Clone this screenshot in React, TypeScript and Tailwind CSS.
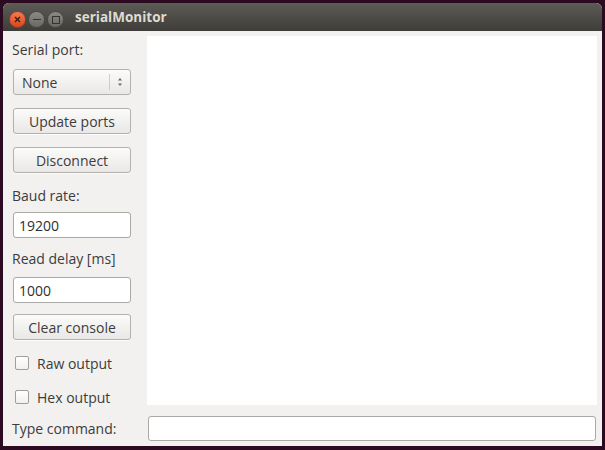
import React from 'react';

const font = { fontFamily: '"Open Sans", "Noto Sans", sans-serif' };

function Btn({ label }: { label: string }) {
  return (
    <div className="h-[26px] w-[118px] rounded-[3px] border border-[#b3b1ac] bg-gradient-to-b from-[#fbfbfa] to-[#e9e8e6] flex items-center justify-center text-[14px] text-[#3c3c3c] shadow-[0_1px_0_rgba(255,255,255,0.8)]">
      {label}
    </div>
  );
}

function Field({ value }: { value: string }) {
  return (
    <div className="h-[26px] w-[118px] rounded-[3px] border border-[#a9a8a4] bg-white flex items-center pl-[5px] text-[14px] text-[#2f2f2f]">
      {value}
    </div>
  );
}

function Label({ text, className = '' }: { text: string; className?: string }) {
  return (
    <div className={`h-[26px] shrink-0 flex items-center -ml-[1px] text-[14px] text-[#3c3c3c] ${className}`}>{text}</div>
  );
}

function Check({ label, className = '' }: { label: string; className?: string }) {
  return (
    <div className={`h-[26px] shrink-0 flex items-center ${className}`}>
      <div className="ml-[2px] w-[14px] h-[14px] rounded-[2px] border border-[#9f9e9a] bg-gradient-to-b from-white to-[#f1f0ee]" />
      <span className="ml-[8px] text-[14px] text-[#3c3c3c]">{label}</span>
    </div>
  );
}

export default function App() {
  return (
    <div className="w-[605px] h-[450px] bg-[#2c0a22] pt-[3px] pl-[3px] pr-[3px] pb-[4px]" style={font}>
      <div className="h-full flex flex-col rounded-t-[6px] overflow-hidden bg-[#f2f1f0]">
        {/* title bar */}
        <div className="h-[28px] shrink-0 bg-gradient-to-b from-[#5c5b56] to-[#3e3d39] flex items-center pt-[5px]">
          <div className="ml-[6px] w-[17px] h-[17px] rounded-full bg-gradient-to-b from-[#f37b4f] to-[#d8461c] border border-[#a8391b] flex items-center justify-center">
            <svg width="7" height="7" viewBox="0 0 7 7">
              <path d="M1 1L6 6M6 1L1 6" stroke="#3b1a0e" strokeWidth="1.3" />
            </svg>
          </div>
          <div className="ml-[2px] w-[17px] h-[17px] rounded-full bg-gradient-to-b from-[#8c8a84] to-[#6b6964] border border-[#4a4844] flex items-center justify-center">
            <div className="w-[8px] h-[1.5px] bg-[#34332f]" />
          </div>
          <div className="ml-[2px] w-[17px] h-[17px] rounded-full bg-gradient-to-b from-[#8c8a84] to-[#6b6964] border border-[#4a4844] flex items-center justify-center">
            <div className="w-[8px] h-[8px] border border-[#34332f]" />
          </div>
          <div className="ml-[11px] -mt-[5px] text-[13.5px] font-bold text-[#dfdbd2]">serialMonitor</div>
        </div>

        {/* body */}
        <div className="flex-1 flex flex-col">
          <div className="flex items-start h-[374px] pt-[5px]">
            <div className="w-[144px] shrink-0 pl-[10px] flex flex-col">
              <Label text="Serial port:" />
              <div className="mt-[7px] h-[26px] w-[118px] rounded-[3px] border border-[#b3b1ac] bg-gradient-to-b from-[#fbfbfa] to-[#e9e8e6] flex items-center text-[14px] text-[#3c3c3c]">
                <span className="ml-[8px] flex-1">None</span>
                <div className="w-px h-[16px] bg-[#cfcdc9]" />
                <svg width="20" height="14" viewBox="0 0 20 14">
                  <path d="M8 5.5L10 3L12 5.5Z" fill="#6a6965" />
                  <path d="M8 8.5L10 11L12 8.5Z" fill="#6a6965" />
                </svg>
              </div>
              <div className="mt-[13px]"><Btn label="Update ports" /></div>
              <div className="mt-[13px]"><Btn label="Disconnect" /></div>
              <Label text="Baud rate:" className="mt-[9px]" />
              <div className="mt-[4px]"><Field value="19200" /></div>
              <Label text="Read delay [ms]" className="mt-[7px]" />
              <div className="mt-[6px]"><Field value="1000" /></div>
              <div className="mt-[11px]"><Btn label="Clear console" /></div>
              <Check label="Raw output" className="mt-[10px]" />
              <Check label="Hex output" className="mt-[8px]" />
            </div>
            <div className="flex-1 mr-[5px] h-[369px] bg-white" />
          </div>
          <div className="flex items-center mt-[11px]">
            <div className="w-[145px] pl-[9px] text-[14px] text-[#3c3c3c]">Type command:</div>
            <div className="flex-1 mr-[6px] h-[25px] rounded-[3px] border border-[#a9a8a4] bg-white" />
          </div>
        </div>
      </div>
    </div>
  );
}
